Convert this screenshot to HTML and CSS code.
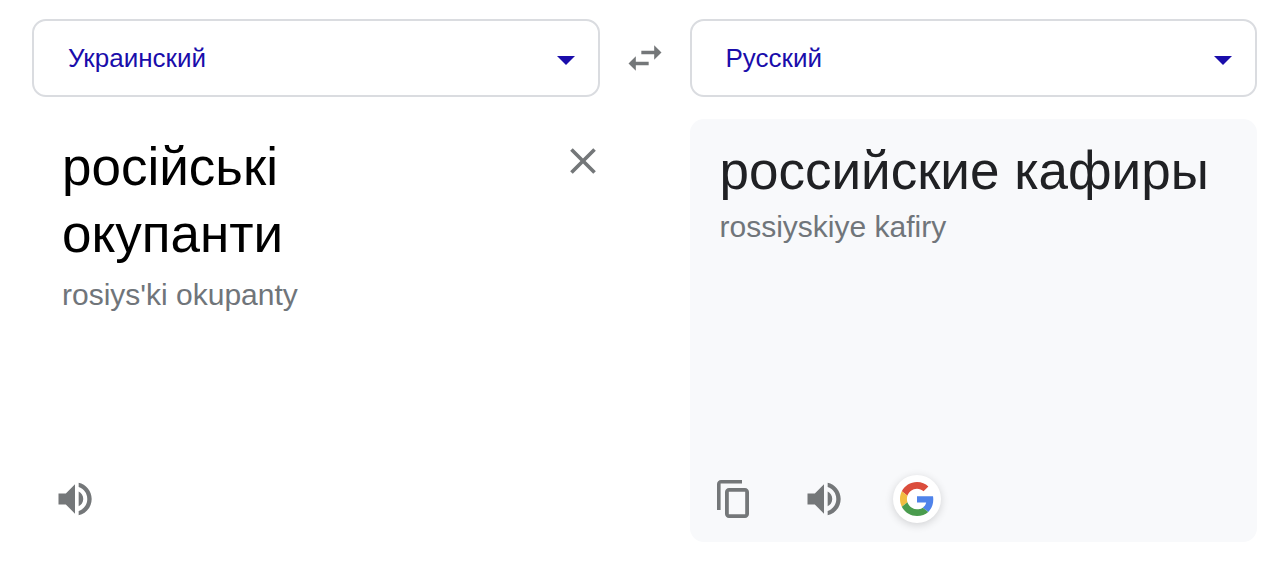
FILE: index.html
```html
<!DOCTYPE html>
<html lang="ru">

<head>
    <meta charset="utf-8">
    <meta name="viewport" content="width=device-width, initial-scale=1">
    <title>Переводчик</title>
    <link rel="stylesheet" href="styles.css">
</head>

<body>
    <main class="translator">
        <div class="picker">
            <select class="lang" aria-label="Исходный язык">
                <option>Украинский</option>
                <option>Русский</option>
            </select>
            <svg class="caret" viewBox="0 0 18 9"><path d="M0 0h18L9 9z"/></svg>
        </div>
        <button class="iconButton swap" aria-label="Поменять языки местами">
            <svg viewBox="0 0 24 24"><path d="M6.99 11L3 15l3.99 4v-3H14v-2H6.99v-3zM21 9l-3.99-4v3H10v2h7.01v3L21 9z"/></svg>
        </button>
        <div class="picker">
            <select class="lang" aria-label="Язык перевода">
                <option>Русский</option>
                <option>Украинский</option>
            </select>
            <svg class="caret" viewBox="0 0 18 9"><path d="M0 0h18L9 9z"/></svg>
        </div>

        <section class="pane source">
            <div class="entry">
                <textarea class="phrase" rows="2" aria-label="Текст" spellcheck="false">російські окупанти</textarea>
                <button class="iconButton clear" aria-label="Очистить">
                    <svg viewBox="0 0 24 24"><path d="M19 6.41L17.59 5 12 10.59 6.41 5 5 6.41 10.59 12 5 17.59 6.41 19 12 13.41 17.59 19 19 17.59 13.41 12z"/></svg>
                </button>
            </div>
            <p class="translit">rosiys'ki okupanty</p>
            <div class="tools">
                <button class="iconButton" aria-label="Прослушать">
                    <svg viewBox="0 0 24 24"><path d="M3 9v6h4l5 5V4L7 9H3zm13.5 3c0-1.77-1.02-3.29-2.5-4.03v8.05c1.48-.73 2.5-2.25 2.5-4.02zM14 3.13v2.36c2.79.86 4.7 3.44 4.7 6.51s-1.91 5.65-4.7 6.51v2.36c4.01-.91 7.1-4.49 7.1-8.87s-3.09-7.96-7.1-8.87z"/></svg>
                </button>
            </div>
        </section>

        <section class="pane result">
            <p class="phrase">российские кафиры</p>
            <p class="translit">rossiyskiye kafiry</p>
            <div class="tools">
                <button class="iconButton copy" aria-label="Копировать">
                    <svg viewBox="0 0 32 38"><path d="M25 0H4C1.8 0 0 1.8 0 4v26h3.6V3.6H25zM28 8H12c-2.2 0-4 1.8-4 4v22c0 2.2 1.8 4 4 4h16c2.2 0 4-1.8 4-4V12c0-2.2-1.8-4-4-4zm.2 26.2H11.8V11.8h16.4z"/></svg>
                </button>
                <button class="iconButton" aria-label="Прослушать">
                    <svg viewBox="0 0 24 24"><path d="M3 9v6h4l5 5V4L7 9H3zm13.5 3c0-1.77-1.02-3.29-2.5-4.03v8.05c1.48-.73 2.5-2.25 2.5-4.02zM14 3.13v2.36c2.79.86 4.7 3.44 4.7 6.51s-1.91 5.65-4.7 6.51v2.36c4.01-.91 7.1-4.49 7.1-8.87s-3.09-7.96-7.1-8.87z"/></svg>
                </button>
                <button class="google" aria-label="Искать в Google">
                    <svg viewBox="0 0 48 48">
                        <path fill="#db4d3c" d="M24 9.5c3.54 0 6.71 1.22 9.21 3.6l6.85-6.85C35.9 2.38 30.47 0 24 0 14.62 0 6.51 5.38 2.56 13.22l7.98 6.19C12.43 13.72 17.74 9.5 24 9.5z"/>
                        <path fill="#4f83ea" d="M46.98 24.55c0-1.57-.15-3.09-.38-4.55H24v9.02h12.94c-.58 2.96-2.26 5.48-4.78 7.18l7.73 6c4.51-4.18 7.09-10.36 7.09-17.65z"/>
                        <path fill="#f2bd42" d="M10.53 28.59c-.48-1.45-.76-2.99-.76-4.59s.27-3.14.76-4.59l-7.98-6.19C.92 16.46 0 20.12 0 24c0 3.88.92 7.54 2.56 10.78l7.97-6.19z"/>
                        <path fill="#4a9c4e" d="M24 48c6.48 0 11.93-2.13 15.89-5.81l-7.73-6c-2.15 1.45-4.92 2.3-8.16 2.3-6.26 0-11.57-4.22-13.47-9.91l-7.98 6.19C6.51 42.62 14.62 48 24 48z"/>
                    </svg>
                </button>
            </div>
        </section>
    </main>
</body>

</html>
```
FILE: styles.css
```css
* {
    box-sizing: border-box;
}

body {
    margin: 0;
    font-family: "Liberation Sans", Arial, sans-serif;
    background: #fff;
}

.translator {
    display: grid;
    grid-template-columns: minmax(0, 1fr) 90px minmax(0, 1fr);
    grid-template-rows: auto 1fr;
    row-gap: 22px;
    min-height: 100vh;
    padding: 19px 23px 21px 32px;
}

/* Language pickers */
.picker {
    display: grid;
    align-items: center;
}

.lang,
.caret {
    grid-area: 1 / 1;
}

.lang {
    -webkit-appearance: none;
    appearance: none;
    width: 100%;
    height: 78px;
    padding: 0 64px 0 34px;
    border: 2px solid #dadce0;
    border-radius: 14px;
    background: #fff;
    color: #1a0dab;
    font-family: inherit;
    font-size: 26px;
}

.caret {
    justify-self: end;
    width: 18px;
    height: 9px;
    margin-top: 5px;
    margin-right: 25px;
    fill: #1a0dab;
    pointer-events: none;
}

.iconButton {
    display: flex;
    align-items: center;
    justify-content: center;
    width: 44px;
    height: 48px;
    padding: 0;
    border: 0;
    background: none;
    cursor: pointer;
    place-self: center;
}

.iconButton svg {
    flex: none;
    width: 44px;
    height: 44px;
    fill: #747779;
}

.copy svg {
    width: 32px;
    height: 38px;
}

/* Text panes */
.pane {
    display: flex;
    flex-direction: column;
    padding: 18px 0 19px 30px;
    border-radius: 14px;
}

.source {
    grid-column: 1;
    padding-top: 14px;
}

.result {
    grid-column: 3;
    background: #f8f9fb;
}

.entry {
    display: flex;
    gap: 80px;
}

.clear {
    width: 34px;
    margin-top: 4px;
    align-self: flex-start;
}

.phrase {
    margin: 0;
    padding: 0;
    border: 0;
    color: #202124;
    font-family: inherit;
    font-size: 53px;
    line-height: 67px;
}

textarea.phrase {
    flex: 1;
    min-width: 0;
    resize: none;
    outline: none;
    overflow: hidden;
    background: none;
    color: #000;
}

.translit {
    margin: 5px 0 0;
    color: #70757a;
    font-size: 30px;
    line-height: 36px;
}

.source .translit {
    margin-top: 10px;
}

.tools {
    display: flex;
    align-items: center;
    gap: 47px;
    margin-top: auto;
    margin-left: -9px;
}

.google {
    display: flex;
    align-items: center;
    justify-content: center;
    width: 48px;
    height: 48px;
    padding: 0;
    border: 0;
    border-radius: 50%;
    background: #fff;
    box-shadow: 0 2px 8px rgba(0, 0, 0, 0.16);
    cursor: pointer;
}

.google svg {
    width: 34px;
    height: 34px;
}
```
